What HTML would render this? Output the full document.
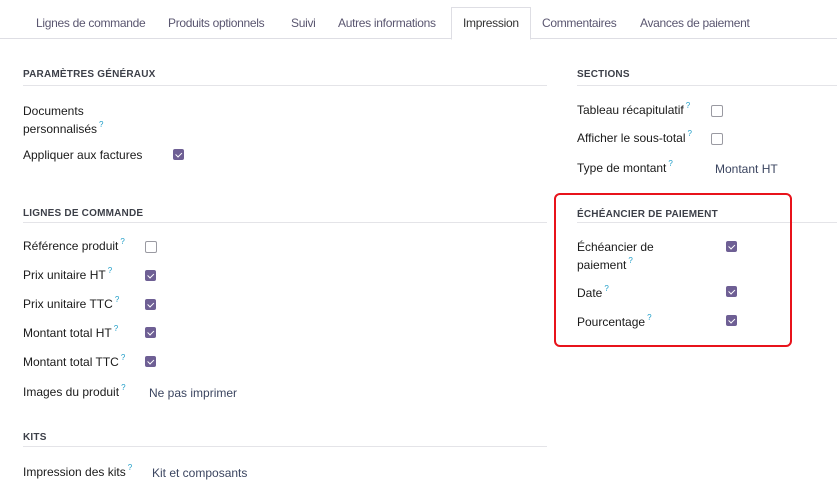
<!DOCTYPE html><html><head><style>
body{margin:0;width:837px;height:484px;background:#fff;font-family:"Liberation Sans",sans-serif;position:relative;overflow:hidden;color:#1f1f1f}
.a{position:absolute;white-space:nowrap}
.t{font-size:12px;letter-spacing:-0.3px;color:#5a5670;top:16px}
.h{font-size:10px;font-weight:bold;color:#3c3f48;letter-spacing:.2px}
.l{font-size:12px;color:#1a1a1a;line-height:15px}
.l sup{color:#1e9dc7;font-size:8px;margin-left:2px;line-height:0;position:relative;top:-1px;vertical-align:super}
.v{font-size:12px;color:#3b4560}
.ln{position:absolute;height:1px;background:#e4e4e8}
.c{position:absolute;width:11px;height:11px;border-radius:2px;background:#6e5f94}
.c:after{content:"";position:absolute;left:3.5px;top:2px;width:2.5px;height:4.5px;border:solid #fff;border-width:0 1.3px 1.3px 0;transform:rotate(45deg)}
.e{position:absolute;width:10px;height:10px;border-radius:2px;border:1px solid #9a9aa2;background:#fff}
</style></head><body>
<div class="ln" style="left:0;top:38px;width:837px;background:#dedee4"></div>
<div style="position:absolute;left:451px;top:7px;width:78px;height:31px;border:1px solid #dedee4;border-bottom:1px solid #fff;background:#fff"></div>
<div class="a t" style="left:36px">Lignes de commande</div>
<div class="a t" style="left:168px">Produits optionnels</div>
<div class="a t" style="left:291px">Suivi</div>
<div class="a t" style="left:338px">Autres informations</div>
<div class="a t" style="left:463px;color:#333">Impression</div>
<div class="a t" style="left:542px">Commentaires</div>
<div class="a t" style="left:640px">Avances de paiement</div>

<div class="a h" style="left:23px;top:69px">PARAMÈTRES GÉNÉRAUX</div>
<div class="ln" style="left:23px;top:85px;width:524px"></div>
<div class="a l" style="left:23px;top:102px;line-height:18px">Documents<br>personnalisés<sup>?</sup></div>
<div class="a l" style="left:23px;top:148px">Appliquer aux factures</div>
<div class="c" style="left:173px;top:149px"></div>

<div class="a h" style="left:23px;top:208px">LIGNES DE COMMANDE</div>
<div class="ln" style="left:23px;top:222px;width:524px"></div>
<div class="a l" style="left:23px;top:239px">Référence produit<sup>?</sup></div>
<div class="e" style="left:145px;top:241px"></div>
<div class="a l" style="left:23px;top:268px">Prix unitaire HT<sup>?</sup></div>
<div class="c" style="left:145px;top:270px"></div>
<div class="a l" style="left:23px;top:297px">Prix unitaire TTC<sup>?</sup></div>
<div class="c" style="left:145px;top:299px"></div>
<div class="a l" style="left:23px;top:326px">Montant total HT<sup>?</sup></div>
<div class="c" style="left:145px;top:327px"></div>
<div class="a l" style="left:23px;top:355px">Montant total TTC<sup>?</sup></div>
<div class="c" style="left:145px;top:356px"></div>
<div class="a l" style="left:23px;top:385px">Images du produit<sup>?</sup></div>
<div class="a v" style="left:149px;top:386px">Ne pas imprimer</div>

<div class="a h" style="left:23px;top:432px">KITS</div>
<div class="ln" style="left:23px;top:446px;width:524px"></div>
<div class="a l" style="left:23px;top:465px">Impression des kits<sup>?</sup></div>
<div class="a v" style="left:152px;top:466px">Kit et composants</div>

<div class="a h" style="left:577px;top:69px">SECTIONS</div>
<div class="ln" style="left:577px;top:85px;width:260px"></div>
<div class="a l" style="left:577px;top:103px">Tableau récapitulatif<sup>?</sup></div>
<div class="e" style="left:711px;top:105px"></div>
<div class="a l" style="left:577px;top:131px">Afficher le sous-total<sup>?</sup></div>
<div class="e" style="left:711px;top:133px"></div>
<div class="a l" style="left:577px;top:161px">Type de montant<sup>?</sup></div>
<div class="a v" style="left:715px;top:162px">Montant HT</div>

<div class="a h" style="left:577px;top:209px">ÉCHÉANCIER DE PAIEMENT</div>
<div class="ln" style="left:577px;top:222px;width:260px"></div>
<div class="a l" style="left:577px;top:238px;line-height:18px">Échéancier de<br>paiement<sup>?</sup></div>
<div class="c" style="left:726px;top:241px"></div>
<div class="a l" style="left:577px;top:286px">Date<sup>?</sup></div>
<div class="c" style="left:726px;top:286px"></div>
<div class="a l" style="left:577px;top:315px">Pourcentage<sup>?</sup></div>
<div class="c" style="left:726px;top:315px"></div>
<div style="position:absolute;left:554px;top:193px;width:234px;height:150px;border:2px solid #e8131b;border-radius:6px"></div>
</body></html>
